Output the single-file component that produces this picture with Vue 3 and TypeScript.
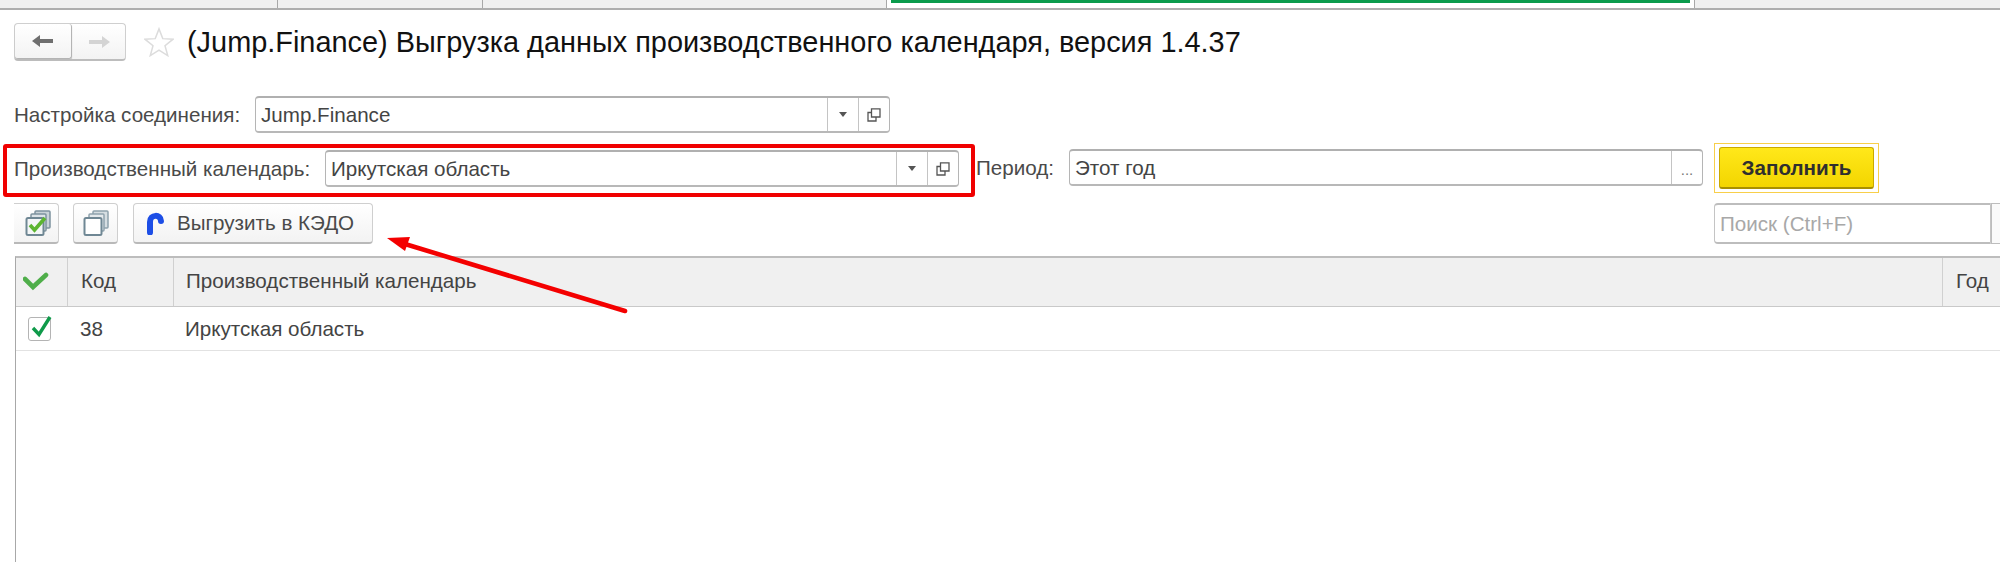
<script setup lang="ts">
interface Mark { id: number; x: number; y: number }
const marks: Mark[] = []
const rowYs = [50, 118, 185, 253, 320, 388, 456, 523]
rowYs.forEach((y, r) => {
  const start = r % 2 === 1 ? 64 : 255
  for (let c = 0; c < 6; c++) {
    const x = start + c * 381
    if (x < 2000) marks.push({ id: r * 10 + c, x, y })
  }
})
</script>

<template>
  <div class="page">
    <div class="tabs">
      <div class="tab t1"></div>
      <div class="tab t2"></div>
      <div class="tab t3"></div>
      <div class="tab active"><div class="green"></div></div>
      <div class="tab t5"></div>
    </div>

    <div class="head">
      <div class="nav">
        <button class="nav-btn back">
          <svg width="24" height="16" viewBox="0 0 24 16"><path d="M1 8 L9 2 V6 H22 V10 H9 V14 Z" fill="#6f6f6f" /></svg>
        </button>
        <button class="nav-btn fwd">
          <svg width="24" height="16" viewBox="0 0 24 16"><path d="M23 8 L15 2 V6 H2 V10 H15 V14 Z" fill="#d4d4d4" /></svg>
        </button>
      </div>
      <svg class="star" width="30" height="30" viewBox="0 0 32 32"><path d="M16 2 L20 12.4 L31 13 L22.4 20 L25.3 30.5 L16 24.6 L6.7 30.5 L9.6 20 L1 13 L12 12.4 Z" fill="#fff" stroke="#dcdcdc" stroke-width="1.6" /></svg>
      <h1 class="title">(Jump.Finance) Выгрузка данных производственного календаря, версия 1.4.37</h1>
    </div>

    <div class="row-one">
      <span class="label l1">Настройка соединения:</span>
      <div class="field f1">
        <span class="val">Jump.Finance</span>
        <span class="cell"><i class="caret"></i></span>
        <span class="cell">
          <svg width="14" height="14" viewBox="0 0 14 14"><path d="M4.5 .8 H13 V9 H4.5 Z M4.5 4.5 H1 V13 H9 V9.5" fill="none" stroke="#555" stroke-width="1.3" /></svg>
        </span>
      </div>
    </div>

    <div class="row-two">
      <div class="hl">
        <span class="label l2">Производственный календарь:</span>
        <div class="field f2">
          <span class="val">Иркутская область</span>
          <span class="cell"><i class="caret"></i></span>
          <span class="cell">
            <svg width="14" height="14" viewBox="0 0 14 14"><path d="M4.5 .8 H13 V9 H4.5 Z M4.5 4.5 H1 V13 H9 V9.5" fill="none" stroke="#555" stroke-width="1.3" /></svg>
          </span>
        </div>
      </div>
      <span class="label l3">Период:</span>
      <div class="field f3">
        <span class="val">Этот год</span>
        <span class="cell dots">...</span>
      </div>
      <div class="fill-wrap"><button class="fill">Заполнить</button></div>
    </div>

    <div class="toolbar">
      <button class="tb icon-b first">
        <svg width="28" height="28" viewBox="0 0 28 28">
          <rect x="11" y="2" width="15" height="17" rx="1" fill="#c9d3d8" stroke="#7d929e" stroke-width="1.5" />
          <rect x="7" y="5" width="15" height="17" rx="1" fill="#dde4e8" stroke="#7d929e" stroke-width="1.5" />
          <rect x="2.5" y="9" width="17" height="17" rx="1.5" fill="#f4f6f7" stroke="#6f8794" stroke-width="2" />
          <path d="M6 16 L10.5 21 L21 9" fill="none" stroke="#5cb531" stroke-width="3.6" />
        </svg>
      </button>
      <button class="tb icon-b second">
        <svg width="28" height="28" viewBox="0 0 28 28">
          <rect x="11" y="2" width="15" height="17" rx="1" fill="#d6dee2" stroke="#8fa2ad" stroke-width="1.5" />
          <rect x="7" y="5" width="15" height="17" rx="1" fill="#e4e9ec" stroke="#8fa2ad" stroke-width="1.5" />
          <rect x="2.5" y="9" width="17" height="17" rx="1.5" fill="#fff" stroke="#6f8794" stroke-width="2" />
        </svg>
      </button>
      <button class="tb kedo">
        <svg class="kedo-i" width="20" height="24" viewBox="0 0 20 24">
          <path d="M4 21.5 V11 C4 3 15 3 15 10" fill="none" stroke="#1d4ee6" stroke-width="6" stroke-linecap="round" />
        </svg>
        <span>Выгрузить в КЭДО</span>
      </button>
      <div class="spacer"></div>
      <div class="search"><span>Поиск (Ctrl+F)</span></div>
      <button class="search-end"></button>
    </div>

    <div class="table">
      <div class="thead">
        <div class="th c0">
          <svg width="26" height="20" viewBox="0 0 26 20"><path d="M2 7 L10 15 L23 3" fill="none" stroke="#4fae4a" stroke-width="4.6" stroke-linecap="round" /></svg>
        </div>
        <div class="th c1">Код</div>
        <div class="th c2">Производственный календарь</div>
        <div class="th c3">Год</div>
      </div>
      <div class="tr">
        <div class="td c0">
          <span class="check">
            <svg width="24" height="24" viewBox="0 0 24 24"><path d="M4 10 L10 16.5 L21 -1" fill="none" stroke="#0f9a4a" stroke-width="3.4" /></svg>
          </span>
        </div>
        <div class="td c1">38</div>
        <div class="td c2">Иркутская область</div>
        <div class="td c3"></div>
      </div>
    </div>

    <div class="wm" aria-hidden="true">
      <span v-for="m in marks" :key="m.id" class="wm-t" :style="{ left: m.x + 'px', top: m.y + 'px' }">m.e.khomyakova</span>
    </div>

    <svg class="arrow" width="2000" height="562" viewBox="0 0 2000 562">
      <path d="M625 311 L405 244" stroke="#f40000" stroke-width="4.6" stroke-linecap="round" />
      <path d="M387 238 L410 237 L405 251 Z" fill="#f40000" />
    </svg>
  </div>
</template>

<style>
html, body { margin: 0; background: #fff; }
</style>

<style scoped>
.page {
  position: relative;
  width: 2000px;
  height: 562px;
  overflow: hidden;
  background: #fff;
  font-family: "Liberation Sans", Arial, sans-serif;
  color: #444;
  font-size: 20.6px;
}
button { font-family: inherit; padding: 0; margin: 0; }
.tabs {
  display: flex;
  height: 8px;
  border-bottom: 2px solid #aeaeae;
  background: #f0f0f0;
}
.tab { height: 8px; border-right: 1px solid #a8a8a8; box-sizing: border-box; }
.t1 { width: 278px; }
.t2 { width: 205px; }
.t3 { width: 404px; }
.active { width: 808px; background: #fff; padding: 0 4px; }
.green { height: 3px; background: #0a9b4c; }
.t5 { flex: 1; border-right: 0; }

.head {
  display: flex;
  align-items: center;
  height: 38px;
  margin-top: 13px;
  padding-left: 14px;
}
.nav {
  display: flex;
  width: 112px;
  height: 38px;
  box-sizing: border-box;
  border: 1px solid #cfcfcf;
  border-bottom: 2px solid #bdbdbd;
  border-radius: 4px;
  background: linear-gradient(#fff, #f3f3f3);
}
.nav-btn {
  border: 0;
  background: none;
  display: flex;
  align-items: center;
  justify-content: center;
}
.back {
  width: 57px;
  border-right: 1px solid #b4b4b4;
  border-bottom: 1px solid #b4b4b4;
  border-radius: 3px;
  box-shadow: 0 1px 1px #bbb;
}
.fwd { flex: 1; }
.star { margin-left: 18px; }
.title {
  margin: 0 0 0 13px;
  font-weight: 400;
  font-size: 28.9px;
  color: #111;
  white-space: nowrap;
}

.row-one {
  display: flex;
  align-items: center;
  height: 37px;
  margin-top: 35px;
  padding-left: 14px;
}
.label { color: #4a4a4a; white-space: nowrap; }
.l1 { width: 241px; }
.field {
  display: flex;
  align-items: stretch;
  box-sizing: border-box;
  border: 1px solid #b5b5b5;
  border-top: 2px solid #b0b0b0;
  border-bottom: 2px solid #b8b8b8;
  border-radius: 4px;
  background: #fff;
  height: 37px;
}
.f1 { width: 635px; }
.val {
  flex: 1;
  padding-left: 5px;
  line-height: 33px;
  white-space: nowrap;
}
.cell {
  width: 30px;
  display: flex;
  align-items: center;
  justify-content: center;
  border-left: 1px solid #c4c4c4;
}
.caret {
  width: 0;
  height: 0;
  border-left: 4px solid transparent;
  border-right: 4px solid transparent;
  border-top: 5px solid #555;
}

.row-two {
  display: flex;
  align-items: flex-start;
  margin-top: 10px;
  padding-left: 3px;
  height: 60px;
}
.hl {
  display: flex;
  align-items: center;
  box-sizing: border-box;
  width: 972px;
  height: 53px;
  margin-top: 1px;
  border: 4px solid #f00000;
  border-radius: 3px;
  padding: 0 0 4px 7px;
}
.l2 { width: 311px; }
.f2 { width: 634px; }
.l3 { margin: 13px 0 0 1px; width: 93px; }
.row-two .f3 { width: 634px; margin-top: 6px; }
.dots { width: 31px; align-items: flex-end; padding-bottom: 6px; box-sizing: border-box; color: #777; font-size: 15px; }
.fill-wrap {
  margin-left: 11px;
  box-sizing: border-box;
  width: 165px;
  height: 50px;
  border: 1px solid #f8cf4a;
  padding: 3px 4px;
}
.fill {
  display: block;
  width: 100%;
  height: 42px;
  border: 1px solid #c9a900;
  border-bottom: 2px solid #a89000;
  border-radius: 3px;
  background: linear-gradient(#ffe81a, #f3d500);
  color: #2f2f2f;
  font-weight: 700;
  font-size: 20.6px;
}

.toolbar {
  display: flex;
  align-items: stretch;
  height: 41px;
  padding-left: 14px;
}
.tb {
  box-sizing: border-box;
  border: 1px solid #cfcfcf;
  border-bottom: 2px solid #b9b9b9;
  border-radius: 4px;
  background: linear-gradient(#fff, #f3f3f3);
  display: flex;
  align-items: center;
  justify-content: center;
  color: #4a4a4a;
  font-size: 20.6px;
}
.first { width: 45px; border-left: 0; border-radius: 0 4px 4px 0; padding-left: 3px; }
.second { width: 45px; margin-left: 14px; }
.kedo { width: 240px; margin-left: 15px; justify-content: flex-start; padding-left: 12px; }
.kedo span { margin-left: 11px; white-space: nowrap; }
.spacer { flex: 1; }
.search {
  box-sizing: border-box;
  width: 277px;
  border: 1px solid #c4c4c4;
  border-top: 2px solid #bdbdbd;
  border-bottom: 2px solid #bdbdbd;
  border-radius: 4px 0 0 4px;
  color: #a8a8a8;
  line-height: 37px;
  padding-left: 5px;
}
.search-end {
  width: 9px;
  box-sizing: border-box;
  border: 1px solid #bdbdbd;
  border-right: 0;
  background: #fafafa;
}

.table {
  margin: 12px 0 0 15px;
  height: 306px;
  border-left: 1px solid #a8a8a8;
  border-top: 2px solid #bdbdbd;
}
.thead, .tr {
  display: grid;
  grid-template-columns: 51px 106px 1769px 1fr;
}
.thead {
  height: 48px;
  background: #f0f0f0;
  border-bottom: 1px solid #c9c9c9;
}
.tr {
  height: 43px;
  border-bottom: 1px solid #e2e2e2;
}
.th, .td {
  display: flex;
  align-items: center;
  padding-left: 13px;
  box-sizing: border-box;
  white-space: nowrap;
  min-width: 0;
}
.th { border-left: 1px solid #d0d0d0; padding-bottom: 2px; }
.th.c0 { border-left: 0; padding-left: 7px; padding-bottom: 0; }
.th.c2, .td.c2 { padding-left: 12px; }
.td.c0 { padding-left: 12px; }
.check {
  display: block;
  width: 23px;
  height: 24px;
  box-sizing: border-box;
  border: 1px solid #b4b4b4;
  border-radius: 3px;
  position: relative;
  background: #fff;
}
.check svg { position: absolute; left: 0; top: 0; overflow: visible; }

.wm { position: absolute; inset: 0; pointer-events: none; }
.wm-t {
  position: absolute;
  font-size: 20px;
  color: rgba(0, 0, 0, 0.022);
  white-space: nowrap;
}
.arrow { position: absolute; left: 0; top: 0; pointer-events: none; }
</style>
